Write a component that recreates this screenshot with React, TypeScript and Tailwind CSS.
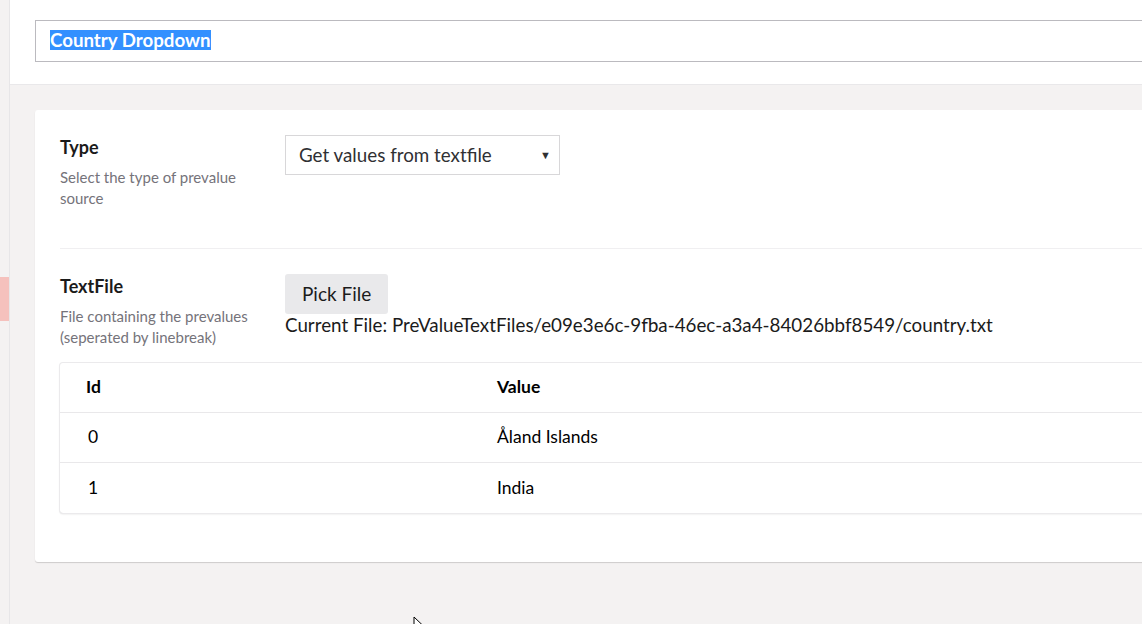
const rows = [
  { id: 0, value: "Åland Islands" },
  { id: 1, value: "India" },
];

export default function App() {
  return (
    <div className="relative flex h-[624px] w-full overflow-hidden bg-[#f4f2f2] text-[#1b1b1b] [font-family:Lato,'Liberation_Sans',sans-serif]">
      <div className="w-[10px] shrink-0 border-r border-[#e7e6e8] bg-[#f4f2f2]">
        <div className="mt-[277px] h-[44px] w-[9px] bg-[#f5c1bd]" />
      </div>

      <div className="flex min-w-0 flex-1 flex-col">
        <header className="h-[85px] shrink-0 border-b border-[#e9e8ea] bg-white pt-[20px] pl-[25px]">
          <div className="-mr-[40px] flex h-[42px] items-center border border-[#bbbabf] px-[14px] pb-[2px]">
            <span className="bg-[#3390ff] text-[18.7px] font-bold leading-[20px] text-white">Country Dropdown</span>
          </div>
        </header>

        <main className="flex-1 pt-[25px] pl-[25px]">
          <div className="-mr-[40px] h-[452px] rounded-[3px] bg-white px-[25px] pt-[25px] shadow-[0_1px_1px_rgba(0,0,0,0.16)]">
            <div className="flex border-b border-[#f0eff1] pb-[39px]">
              <div className="w-[225px] shrink-0 pt-[2px]">
                <div className="text-[18px] font-bold leading-[20px]">Type</div>
                <div className="mt-[10px] w-[200px] text-[15px] leading-[21px] text-[#75737a]">
                  Select the type of prevalue source
                </div>
              </div>
              <div className="flex h-[40px] w-[275px] items-center justify-between border border-[#d8d7d9] pr-[8px] pl-[13px]">
                <span className="text-[18.8px] text-[#303033]">Get values from textfile</span>
                <span className="text-[11px] text-[#303033]">▼</span>
              </div>
            </div>

            <div className="flex pt-[25px]">
              <div className="w-[225px] shrink-0 pt-[2px]">
                <div className="text-[18px] font-bold leading-[20px]">TextFile</div>
                <div className="mt-[10px] text-[15px] leading-[21px] text-[#75737a]">
                  File containing the prevalues
                  <br />
                  (seperated by linebreak)
                </div>
              </div>
              <div className="flex flex-col items-start">
                <button className="h-[40px] rounded-[3px] bg-[#e9e9eb] px-[17px] text-[19px] text-[#1b1b1b]">
                  Pick File
                </button>
                <div className="text-[18.8px] leading-[22px]">
                  Current File: PreValueTextFiles/e09e3e6c-9fba-46ec-a3a4-84026bbf8549/country.txt
                </div>
              </div>
            </div>

            <table className="mt-[15px] w-full border-separate border-spacing-0 rounded-[3px] text-left text-black shadow-[0_1px_2px_rgba(0,0,0,0.16)] ring-1 ring-[#ebeaec]">
              <thead>
                <tr className="h-[50px]">
                  <th className="w-[437px] border-b border-[#e9e8ea] pl-[26px] text-[17.5px] font-bold">Id</th>
                  <th className="border-b border-[#e9e8ea] text-[17.5px] font-bold">Value</th>
                </tr>
              </thead>
              <tbody>
                {rows.map((r, i) => (
                  <tr key={r.id} className="h-[50px]">
                    <td className={`pl-[28px] text-[17.5px] ${i < rows.length - 1 ? "border-b border-[#e9e8ea]" : ""}`}>{r.id}</td>
                    <td className={`text-[17.5px] ${i < rows.length - 1 ? "border-b border-[#e9e8ea]" : ""}`}>{r.value}</td>
                  </tr>
                ))}
              </tbody>
            </table>
          </div>
        </main>
      </div>

      <svg className="absolute left-[413px] top-[616px]" width="12" height="18" viewBox="0 0 12 18">
        <path d="M1 1 L1 15 L4.5 11.5 L7 17 L9 16 L6.5 10.5 L11 10.5 Z" fill="white" stroke="black" strokeWidth="1" />
      </svg>
    </div>
  );
}
